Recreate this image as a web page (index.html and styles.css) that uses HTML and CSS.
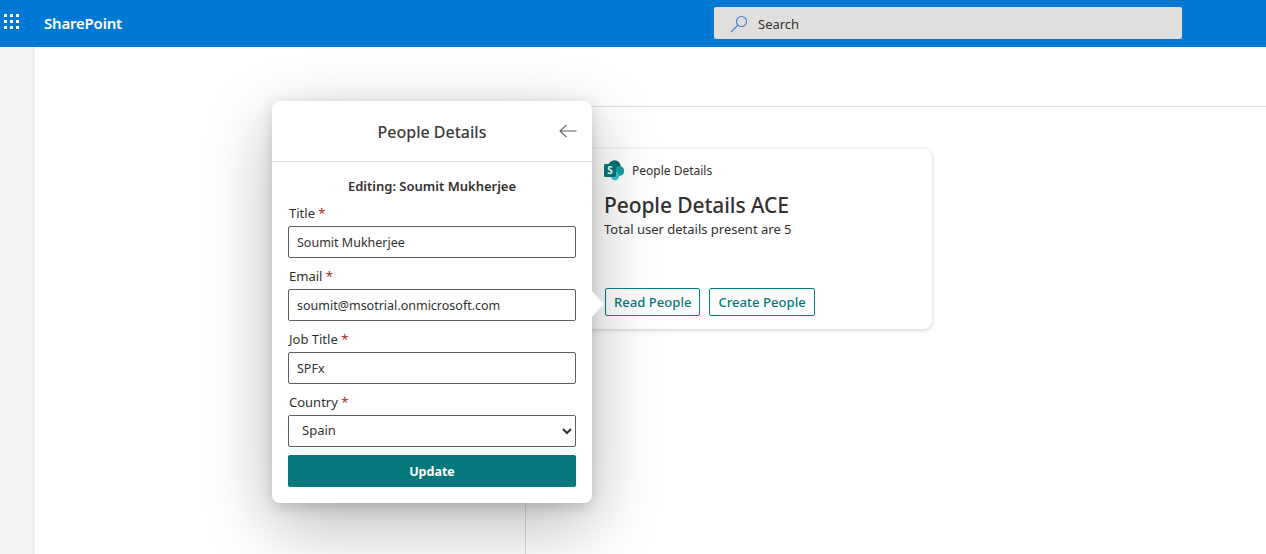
FILE: index.html
```html
<!DOCTYPE html>
<html lang="en">
<head>
  <meta charset="UTF-8">
  <meta name="viewport" content="width=device-width, initial-scale=1.0">
  <title>SharePoint</title>
  <link rel="stylesheet" href="styles.css">
</head>
<body>
  <header class="suite-bar">
    <div class="waffle">
      <svg width="16" height="16" viewBox="0 0 16 16" fill="#fff">
        <rect x="0" y="0" width="3" height="3"/><rect x="6" y="0" width="3" height="3"/><rect x="12" y="0" width="3" height="3"/>
        <rect x="0" y="6" width="3" height="3"/><rect x="6" y="6" width="3" height="3"/><rect x="12" y="6" width="3" height="3"/>
        <rect x="0" y="12" width="3" height="3"/><rect x="6" y="12" width="3" height="3"/><rect x="12" y="12" width="3" height="3"/>
      </svg>
    </div>
    <div class="brand">SharePoint</div>
    <div class="search">
      <svg width="18" height="18" viewBox="0 0 18 18" fill="none" stroke="#3f7fc4" stroke-width="1.1">
        <circle cx="11.5" cy="6.5" r="5"/>
        <path d="M8 10 L1 17"/>
      </svg>
      <span>Search</span>
    </div>
  </header>

  <div class="page">
    <aside class="rail"></aside>
    <main class="canvas">
      <div class="col-left"></div>
      <div class="col-right">
        <section class="ace-card">
          <div class="ace-head">
            <svg width="21" height="21" viewBox="0 0 21 21">
              <circle cx="10.5" cy="6.5" r="6.2" fill="#036c70"/>
              <circle cx="15.2" cy="11" r="5" fill="#1a9ba1"/>
              <circle cx="11" cy="16" r="4.2" fill="#37c6d0"/>
              <rect x="0" y="4" width="12" height="13" rx="1.2" fill="#03787c"/>
              <text x="6" y="14.2" class="logo-s">S</text>
            </svg>
            <span>People Details</span>
          </div>
          <h1 class="ace-title">People Details ACE</h1>
          <p class="ace-text">Total user details present are 5</p>
          <div class="ace-actions">
            <button type="button" class="btn-outline">Read People</button>
            <button type="button" class="btn-outline">Create People</button>
          </div>
        </section>
      </div>
    </main>
  </div>

  <div class="popup">
    <div class="beak"></div>
    <div class="popup-head">
      <h2>People Details</h2>
      <svg class="back" width="18" height="14" viewBox="0 0 18 14" fill="none" stroke="#605e5c" stroke-width="1.1">
        <path d="M7.5 0.8 L1 7 L7.5 13.2 M1 7 H17.5"/>
      </svg>
    </div>
    <form class="popup-body">
      <div class="editing">Editing: Soumit Mukherjee</div>
      <label class="field-label">Title <em>*</em></label>
      <input class="field" type="text" value="Soumit Mukherjee">
      <label class="field-label">Email <em>*</em></label>
      <input class="field" type="text" value="soumit@msotrial.onmicrosoft.com">
      <label class="field-label">Job Title <em>*</em></label>
      <input class="field" type="text" value="SPFx">
      <label class="field-label">Country <em>*</em></label>
      <select class="field select">
        <option>Spain</option>
      </select>
      <button type="button" class="btn-update">Update</button>
    </form>
  </div>
</body>
</html>
```

FILE: styles.css
```css
* {
  box-sizing: border-box;
}

html, body {
  height: 100%;
}

body {
  margin: 0;
  overflow: hidden;
  background-color: #fff;
  color: #323130;
  font-family: "Noto Sans", "Open Sans", sans-serif;
  display: flex;
  flex-direction: column;
}

.suite-bar {
  height: 47px;
  flex: none;
  background-color: #0078d4;
  display: flex;
  align-items: center;
}

.waffle {
  width: 44px;
  padding-left: 4px;
  margin-bottom: 3px;
  display: flex;
}

.brand {
  width: 670px;
  margin-bottom: 2px;
  color: #fff;
  font-size: 15px;
  font-weight: 600;
  letter-spacing: -0.2px;
}

.search {
  width: 468px;
  height: 32px;
  margin-bottom: 1px;
  background-color: #e1dfdd;
  border-radius: 2px;
  padding: 1px 0 0 16px;
  display: flex;
  align-items: center;
  gap: 10px;
  font-size: 13px;
  color: #323130;
}

.page {
  flex: 1;
  display: flex;
}

.rail {
  width: 35px;
  background-color: #f3f2f1;
}

.canvas {
  flex: 1;
  padding-top: 59px;
  display: flex;
}

.col-left {
  width: 491px;
  border-right: 1px solid #dddbd9;
}

.col-right {
  flex: 1;
  border-top: 1px solid #e1dfdd;
  padding: 42px 0 0 58px;
}

.ace-card {
  width: 348px;
  height: 180px;
  padding: 11px 20px 13px;
  background-color: #fff;
  border-radius: 8px;
  box-shadow: 0 1px 4px rgba(0, 0, 0, 0.2);
  display: flex;
  flex-direction: column;
}

.ace-head {
  display: flex;
  align-items: center;
  gap: 7px;
  font-size: 12px;
}

.logo-s {
  fill: #fff;
  font-size: 10px;
  font-weight: 700;
  text-anchor: middle;
}

.ace-title {
  margin: 10px 0 0;
  font-size: 21px;
  font-weight: 500;
  line-height: 28px;
  letter-spacing: -0.1px;
}

.ace-text {
  margin: 1px 0 0;
  font-size: 13px;
  line-height: 18px;
}

.ace-actions {
  margin-top: auto;
  padding-left: 1px;
  display: flex;
  gap: 9px;
}

.btn-outline {
  height: 28px;
  padding: 0 8px;
  background-color: #fff;
  border: 1px solid #038387;
  border-radius: 2px;
  color: #03787c;
  font-family: inherit;
  font-size: 13.1px;
  font-weight: 500;
}

.popup {
  position: absolute;
  left: 272px;
  top: 101px;
  width: 320px;
  height: 402px;
  background-color: #fff;
  border-radius: 8px;
  box-shadow: 0 22px 70px rgba(0, 0, 0, 0.28), 0 4px 14px rgba(0, 0, 0, 0.16);
}

.beak {
  position: absolute;
  left: 320px;
  top: 190px;
  width: 0;
  height: 0;
  border-left: 12px solid #fff;
  border-top: 13px solid transparent;
  border-bottom: 13px solid transparent;
}

.popup-head {
  height: 61px;
  padding-top: 2px;
  border-bottom: 1px solid #e1dfdd;
  display: flex;
  align-items: center;
  justify-content: center;
  position: relative;
}

.popup-head h2 {
  margin: 0;
  font-size: 16px;
  font-weight: 500;
  color: #3b3a39;
}

.back {
  position: absolute;
  right: 15px;
  top: 23px;
}

.popup-body {
  padding: 16px 16px 0;
  display: flex;
  flex-direction: column;
}

.editing {
  text-align: center;
  font-size: 13px;
  font-weight: 600;
  line-height: 17px;
  margin-bottom: 10px;
}

.field-label {
  padding-left: 1px;
  font-size: 13px;
  line-height: 17px;
  margin-bottom: 4px;
}

.field-label em {
  font-style: normal;
  color: #a4262c;
}

.field {
  height: 32px;
  flex: none;
  margin-bottom: 10px;
  padding: 0 8px;
  border: 1px solid #605e5c;
  border-radius: 2px;
  background-color: #fff;
  color: #323130;
  font-family: inherit;
  font-size: 12.5px;
}

.select {
  padding: 0 8px 2px 9px;
  font-size: 13px;
  margin-bottom: 8px;
}

.btn-update {
  height: 32px;
  background-color: #03787c;
  border: none;
  border-radius: 2px;
  color: #fff;
  font-family: inherit;
  font-size: 12.5px;
  font-weight: 700;
}
```
